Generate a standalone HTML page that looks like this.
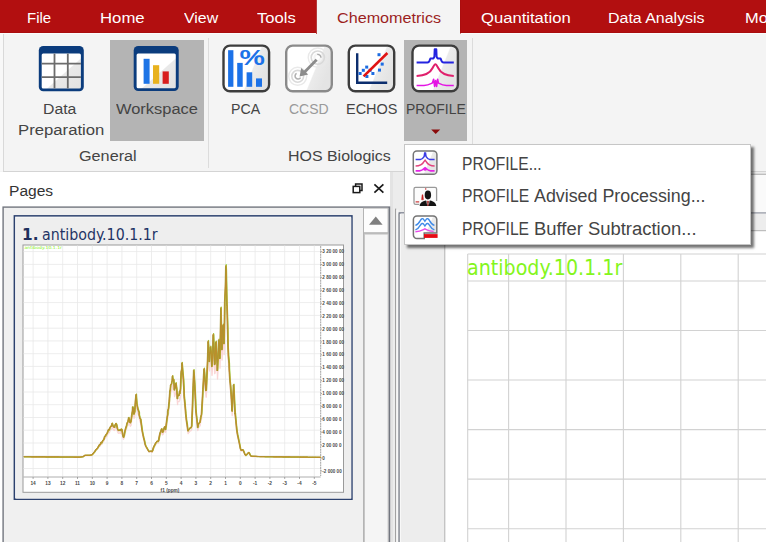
<!DOCTYPE html>
<html><head><meta charset="utf-8"><title>Chemometrics - PROFILE</title>
<style>
html,body{margin:0;padding:0}
body{width:766px;height:542px;overflow:hidden;position:relative;background:#fff;font-family:"Liberation Sans",sans-serif}
.a{position:absolute}
.t{position:absolute;white-space:nowrap;line-height:normal}
</style></head><body>
<!-- ribbon -->
<svg class="a" style="left:0;top:0" width="766" height="36"><rect x="0" y="0" width="766" height="33.3" fill="#a30c0d"/><rect x="0" y="0" width="766" height="32.4" fill="#b20f10"/></svg>
<div class="a" style="left:0;top:33px;width:766px;height:139px;background:#f4f4f4"></div>
<div class="a" style="left:0;top:33px;width:766px;height:1px;background:#fbfbfb"></div>
<div class="a" style="left:0;top:34px;width:3px;height:137px;background:#f8f8f8"></div>
<div class="a" style="left:3px;top:34px;width:1px;height:138px;background:#d9d9d9"></div>
<div class="a" style="left:3px;top:171px;width:763px;height:1px;background:#d4d4d4"></div>
<svg class="a" style="left:0;top:0" width="766" height="36"><rect x="316.1" y="0" width="144.4" height="34" fill="#a30c0d"/><rect x="316.8" y="0" width="143.2" height="34" fill="#f4f4f4"/></svg>
<!-- active buttons -->
<div class="a" style="left:110.2px;top:40.2px;width:93.5px;height:100.4px;background:#b4b4b4"></div>
<div class="a" style="left:404px;top:40.2px;width:63.2px;height:100.4px;background:#b4b4b4"></div>
<div class="a" style="left:208px;top:38px;width:1px;height:130px;background:#dcdcdc"></div>
<div class="a" style="left:472px;top:38px;width:1px;height:130px;background:#dcdcdc"></div>

<!-- below ribbon -->
<div class="a" style="left:390.3px;top:172px;width:376px;height:370px;background:#ececec"></div>
<div class="a" style="left:390.3px;top:172px;width:3px;height:370px;background:#e3e3e3"></div>
<!-- pages list / scrollbar / right pane frame -->
<svg class="a" style="left:0;top:0" width="766" height="542" viewBox="0 0 766 542" shape-rendering="geometricPrecision">
 <!-- list panel -->
 <rect x="2.4" y="206.4" width="387.8" height="340" fill="#72767f"/>
 <rect x="3.8" y="207.8" width="384.6" height="340" fill="#f0f0f0"/>
 <!-- selected item -->
 <rect x="13.6" y="215.1" width="339.1" height="284.9" fill="#2c416e"/>
 <rect x="15.1" y="216.6" width="336.1" height="281.9" fill="#fbfbfb"/>
 <rect x="16.1" y="217.6" width="335.1" height="280.9" fill="#eeeeee"/>
 <!-- scrollbar -->
 <rect x="363" y="207.8" width="25.4" height="340" fill="#b4b4b4"/>
 <rect x="364" y="208.6" width="23.6" height="23.6" fill="#fdfdfd"/>
 <rect x="364" y="233.6" width="24.4" height="320" fill="#c6c6c6"/>
 <rect x="365" y="234.6" width="22.6" height="320" fill="#f5f5f5"/>
 <!-- right pane frame -->
 <rect x="395.1" y="208.6" width="1.1" height="340" fill="#9a9a9a"/>
 <rect x="396.2" y="209.6" width="2.4" height="340" fill="#f6f6f6"/>
 <rect x="398.6" y="212.3" width="380" height="340" fill="#6a7080"/>
 <rect x="398.6" y="213.6" width="1.2" height="340" fill="#8c8f96"/>
 <rect x="399.8" y="213.6" width="380" height="340" fill="#fafafa"/>
 <rect x="400.8" y="213.6" width="380" height="340" fill="#ededed"/>
 <rect x="444.3" y="230.2" width="330" height="320" fill="#b2b2b2"/>
 <rect x="445.3" y="231.2" width="330" height="320" fill="#ffffff"/>
 <rect x="745" y="173.8" width="30" height="1" fill="#a0a0a0"/>
 <rect x="745" y="174.8" width="30" height="37.5" fill="#fafafa"/>
</svg>
<svg class="a" style="left:0;top:0" width="766" height="542"><g stroke="#d2d2d2" stroke-width="1.1"><line x1="467.7" y1="254" x2="467.7" y2="542"/><line x1="508.6" y1="254" x2="508.6" y2="542"/><line x1="566" y1="254" x2="566" y2="542"/><line x1="623.4" y1="254" x2="623.4" y2="542"/><line x1="680.8" y1="254" x2="680.8" y2="542"/><line x1="738.2" y1="254" x2="738.2" y2="542"/><line x1="467.7" y1="254.0" x2="766" y2="254.0"/><line x1="467.7" y1="281.0" x2="766" y2="281.0"/><line x1="467.7" y1="330.5" x2="766" y2="330.5"/><line x1="467.7" y1="380.0" x2="766" y2="380.0"/><line x1="467.7" y1="429.6" x2="766" y2="429.6"/><line x1="467.7" y1="479.1" x2="766" y2="479.1"/><line x1="467.7" y1="528.7" x2="766" y2="528.7"/></g></svg>

<svg style="position:absolute;left:0;top:0" width="766" height="542" viewBox="0 0 766 542">
 <rect x="23" y="245" width="320.5" height="247.3" fill="#fff" stroke="#9a9a9a" stroke-width="1"/>
 <g stroke="#e9e9e9" stroke-width="0.8"><line x1="33.1" y1="245.5" x2="33.1" y2="476.5"/><line x1="47.9" y1="245.5" x2="47.9" y2="476.5"/><line x1="62.7" y1="245.5" x2="62.7" y2="476.5"/><line x1="77.5" y1="245.5" x2="77.5" y2="476.5"/><line x1="92.3" y1="245.5" x2="92.3" y2="476.5"/><line x1="107.1" y1="245.5" x2="107.1" y2="476.5"/><line x1="121.9" y1="245.5" x2="121.9" y2="476.5"/><line x1="136.7" y1="245.5" x2="136.7" y2="476.5"/><line x1="151.5" y1="245.5" x2="151.5" y2="476.5"/><line x1="166.3" y1="245.5" x2="166.3" y2="476.5"/><line x1="181.1" y1="245.5" x2="181.1" y2="476.5"/><line x1="195.9" y1="245.5" x2="195.9" y2="476.5"/><line x1="210.7" y1="245.5" x2="210.7" y2="476.5"/><line x1="225.5" y1="245.5" x2="225.5" y2="476.5"/><line x1="240.3" y1="245.5" x2="240.3" y2="476.5"/><line x1="255.1" y1="245.5" x2="255.1" y2="476.5"/><line x1="269.9" y1="245.5" x2="269.9" y2="476.5"/><line x1="284.7" y1="245.5" x2="284.7" y2="476.5"/><line x1="299.5" y1="245.5" x2="299.5" y2="476.5"/><line x1="314.3" y1="245.5" x2="314.3" y2="476.5"/><line x1="23.5" y1="251.6" x2="320.5" y2="251.6"/><line x1="23.5" y1="264.4" x2="320.5" y2="264.4"/><line x1="23.5" y1="277.1" x2="320.5" y2="277.1"/><line x1="23.5" y1="289.9" x2="320.5" y2="289.9"/><line x1="23.5" y1="302.6" x2="320.5" y2="302.6"/><line x1="23.5" y1="315.4" x2="320.5" y2="315.4"/><line x1="23.5" y1="328.2" x2="320.5" y2="328.2"/><line x1="23.5" y1="340.9" x2="320.5" y2="340.9"/><line x1="23.5" y1="353.7" x2="320.5" y2="353.7"/><line x1="23.5" y1="366.4" x2="320.5" y2="366.4"/><line x1="23.5" y1="379.2" x2="320.5" y2="379.2"/><line x1="23.5" y1="392.0" x2="320.5" y2="392.0"/><line x1="23.5" y1="404.7" x2="320.5" y2="404.7"/><line x1="23.5" y1="417.5" x2="320.5" y2="417.5"/><line x1="23.5" y1="430.2" x2="320.5" y2="430.2"/><line x1="23.5" y1="443.0" x2="320.5" y2="443.0"/><line x1="23.5" y1="455.8" x2="320.5" y2="455.8"/><line x1="23.5" y1="468.5" x2="320.5" y2="468.5"/></g>
 <line x1="320.7" y1="246" x2="320.7" y2="476" stroke="#8a8a8a" stroke-width="0.8" stroke-dasharray="2 0.6"/>
 <line x1="23.5" y1="477" x2="320.7" y2="477" stroke="#9a9a9a" stroke-width="0.8"/>
 <g stroke="#777" stroke-width="0.6"><line x1="320.7" y1="251.6" x2="322" y2="251.6"/><line x1="320.7" y1="264.5" x2="322" y2="264.5"/><line x1="320.7" y1="277.4" x2="322" y2="277.4"/><line x1="320.7" y1="290.3" x2="322" y2="290.3"/><line x1="320.7" y1="303.2" x2="322" y2="303.2"/><line x1="320.7" y1="316.1" x2="322" y2="316.1"/><line x1="320.7" y1="329.0" x2="322" y2="329.0"/><line x1="320.7" y1="341.9" x2="322" y2="341.9"/><line x1="320.7" y1="354.8" x2="322" y2="354.8"/><line x1="320.7" y1="367.7" x2="322" y2="367.7"/><line x1="320.7" y1="380.6" x2="322" y2="380.6"/><line x1="320.7" y1="393.5" x2="322" y2="393.5"/><line x1="320.7" y1="406.4" x2="322" y2="406.4"/><line x1="320.7" y1="419.3" x2="322" y2="419.3"/><line x1="320.7" y1="432.2" x2="322" y2="432.2"/><line x1="320.7" y1="445.1" x2="322" y2="445.1"/><line x1="320.7" y1="458.0" x2="322" y2="458.0"/><line x1="320.7" y1="470.9" x2="322" y2="470.9"/><line x1="33.1" y1="477" x2="33.1" y2="479"/><line x1="47.9" y1="477" x2="47.9" y2="479"/><line x1="62.7" y1="477" x2="62.7" y2="479"/><line x1="77.5" y1="477" x2="77.5" y2="479"/><line x1="92.3" y1="477" x2="92.3" y2="479"/><line x1="107.1" y1="477" x2="107.1" y2="479"/><line x1="121.9" y1="477" x2="121.9" y2="479"/><line x1="136.7" y1="477" x2="136.7" y2="479"/><line x1="151.5" y1="477" x2="151.5" y2="479"/><line x1="166.3" y1="477" x2="166.3" y2="479"/><line x1="181.1" y1="477" x2="181.1" y2="479"/><line x1="195.9" y1="477" x2="195.9" y2="479"/><line x1="210.7" y1="477" x2="210.7" y2="479"/><line x1="225.5" y1="477" x2="225.5" y2="479"/><line x1="240.3" y1="477" x2="240.3" y2="479"/><line x1="255.1" y1="477" x2="255.1" y2="479"/><line x1="269.9" y1="477" x2="269.9" y2="479"/><line x1="284.7" y1="477" x2="284.7" y2="479"/><line x1="299.5" y1="477" x2="299.5" y2="479"/><line x1="314.3" y1="477" x2="314.3" y2="479"/></g>
 <g font-family="Liberation Sans, sans-serif" font-size="4.6" fill="#4a4a4a" style="font-weight:bold"><text x="322.3" y="253.2">3 20 00 00</text><text x="322.3" y="266.1">3 00 00 00</text><text x="322.3" y="279.0">2 80 00 00</text><text x="322.3" y="291.9">2 60 00 00</text><text x="322.3" y="304.8">2 40 00 00</text><text x="322.3" y="317.7">2 20 00 00</text><text x="322.3" y="330.6">2 00 00 00</text><text x="322.3" y="343.5">1 80 00 00</text><text x="322.3" y="356.4">1 60 00 00</text><text x="322.3" y="369.3">1 40 00 00</text><text x="322.3" y="382.2">1 20 00 00</text><text x="322.3" y="395.1">1 00 00 00</text><text x="322.3" y="408.0">8 00 00 0</text><text x="322.3" y="420.9">6 00 00 0</text><text x="322.3" y="433.8">4 00 00 0</text><text x="322.3" y="446.7">2 00 00 0</text><text x="322.3" y="459.6">0</text><text x="322.3" y="472.5">-2 000 00</text></g>
 <g font-family="Liberation Sans, sans-serif" font-size="4.8" fill="#4a4a4a" style="font-weight:bold"><text x="33.1" y="485.4" text-anchor="middle">14</text><text x="47.9" y="485.4" text-anchor="middle">13</text><text x="62.7" y="485.4" text-anchor="middle">12</text><text x="77.5" y="485.4" text-anchor="middle">11</text><text x="92.3" y="485.4" text-anchor="middle">10</text><text x="107.1" y="485.4" text-anchor="middle">9</text><text x="121.9" y="485.4" text-anchor="middle">8</text><text x="136.7" y="485.4" text-anchor="middle">7</text><text x="151.5" y="485.4" text-anchor="middle">6</text><text x="166.3" y="485.4" text-anchor="middle">5</text><text x="181.1" y="485.4" text-anchor="middle">4</text><text x="195.9" y="485.4" text-anchor="middle">3</text><text x="210.7" y="485.4" text-anchor="middle">2</text><text x="225.5" y="485.4" text-anchor="middle">1</text><text x="240.3" y="485.4" text-anchor="middle">0</text><text x="255.1" y="485.4" text-anchor="middle">-1</text><text x="269.9" y="485.4" text-anchor="middle">-2</text><text x="284.7" y="485.4" text-anchor="middle">-3</text><text x="299.5" y="485.4" text-anchor="middle">-4</text><text x="314.3" y="485.4" text-anchor="middle">-5</text><text x="170" y="491.6" text-anchor="middle">f1 (ppm)</text></g>
 <text x="24.5" y="249.3" font-family="DejaVu Sans Condensed, DejaVu Sans, sans-serif" font-size="4.2" fill="#86f020" textLength="37.5" lengthAdjust="spacingAndGlyphs">antibody.10.1.1r</text>
 <g fill="none" stroke-linejoin="round">
  <path d="M23.8,456.9 L24.6,456.9 L25.3,456.9 L26.1,456.9 L26.8,456.9 L27.6,456.9 L28.3,456.9 L29.1,457.0 L29.8,457.0 L30.6,457.0 L31.3,457.0 L32.0,457.0 L32.8,457.0 L33.5,457.0 L34.3,457.0 L35.0,457.0 L35.8,457.0 L36.5,457.0 L37.3,457.0 L38.0,457.0 L38.8,457.0 L39.5,457.0 L40.3,457.0 L41.0,457.0 L41.8,457.0 L42.5,457.0 L43.3,457.0 L44.0,457.0 L44.8,457.1 L45.5,457.1 L46.3,457.1 L47.0,457.1 L47.8,457.1 L48.5,457.1 L49.3,457.1 L50.0,457.1 L50.8,457.1 L51.5,457.1 L52.3,457.1 L53.0,457.1 L53.8,457.1 L54.5,457.1 L55.3,457.1 L56.0,457.1 L56.8,457.1 L57.5,457.1 L58.3,457.1 L59.0,457.1 L59.8,457.1 L60.5,457.2 L61.3,457.2 L62.0,457.2 L62.8,457.2 L63.5,457.2 L64.3,457.2 L65.0,457.2 L65.8,457.2 L66.5,457.2 L67.3,457.2 L68.0,457.2 L68.8,457.2 L69.5,457.2 L70.3,457.2 L71.0,457.2 L71.8,457.2 L72.5,457.2 L73.3,457.2 L74.0,457.2 L74.8,457.2 L75.5,457.2 L76.3,457.3 L77.0,457.3 L77.8,457.3 L78.5,457.3 L79.3,457.3 L80.0,457.3 L80.8,457.2 L81.5,457.1 L82.3,457.0 L83.0,456.9 L83.8,456.5 L84.5,455.9 L85.3,455.6 L86.0,455.6 L86.8,455.6 L87.5,455.6 L88.3,455.6 L89.0,455.6 L89.8,455.5 L90.5,455.5 L91.3,455.5 L92.0,455.2 L92.8,454.4 L93.5,453.6 L94.3,452.8 L95.0,452.0 L95.8,450.8 L96.5,450.1 L97.3,449.5 L98.0,448.5 L98.8,447.3 L99.5,445.9 L100.3,446.1 L101.0,444.0 L101.8,444.4 L102.5,442.7 L103.3,442.0 L104.0,441.0 L104.8,438.4 L105.5,438.3 L106.3,436.6 L107.0,436.1 L107.8,434.4 L108.5,432.2 L109.3,432.8 L110.0,430.8 L110.8,429.4 L111.5,429.4 L112.3,426.6 L113.0,428.9 L113.8,430.1 L114.5,430.5 L115.3,428.0 L116.0,426.8 L116.8,428.3 L117.5,431.6 L118.3,433.1 L119.0,433.4 L119.8,432.6 L120.5,433.4 L121.3,431.9 L122.0,432.5 L122.8,437.0 L123.5,439.3 L124.3,437.4 L125.0,433.8 L125.8,431.1 L126.5,429.0 L127.3,426.2 L128.1,425.3 L128.8,421.5 L129.6,424.0 L130.3,426.4 L131.1,425.1 L131.8,419.7 L132.6,415.4 L132.8,411.7 L133.3,413.2 L134.1,418.4 L134.8,416.1 L135.6,406.1 L136.3,400.5 L136.3,401.1 L137.1,409.5 L137.8,413.0 L137.8,413.2 L138.6,415.3 L139.3,417.1 L139.3,419.0 L140.1,422.0 L140.8,423.2 L141.6,428.4 L142.3,433.2 L143.1,436.7 L143.8,439.9 L144.6,442.6 L145.3,445.8 L146.1,447.7 L146.8,448.7 L147.6,450.0 L148.3,451.1 L149.1,452.3 L149.8,452.1 L150.6,451.9 L151.3,451.8 L152.1,452.4 L152.8,451.0 L153.6,448.6 L154.3,447.2 L155.1,445.9 L155.8,444.5 L156.6,443.6 L157.3,442.8 L158.1,443.2 L158.8,441.9 L159.6,437.8 L160.3,435.2 L161.1,433.3 L161.8,431.6 L162.6,434.9 L163.3,434.0 L164.1,431.3 L164.8,429.7 L165.6,432.4 L166.3,428.3 L167.1,422.6 L167.8,418.4 L167.9,415.7 L168.6,413.2 L169.3,407.1 L170.1,397.1 L170.3,397.1 L170.8,392.0 L171.6,391.1 L172.3,388.0 L172.6,383.8 L173.1,387.5 L173.8,387.3 L174.6,396.6 L174.7,394.5 L175.3,395.0 L176.1,390.3 L176.2,391.8 L176.8,395.6 L177.6,404.5 L177.6,402.4 L178.3,401.6 L179.1,401.7 L179.8,397.5 L180.0,399.8 L180.6,395.4 L181.3,380.2 L182.1,376.8 L182.1,371.9 L182.8,379.6 L183.6,387.1 L184.1,397.1 L184.3,402.3 L185.1,408.9 L185.8,417.3 L185.9,418.3 L186.6,424.0 L187.3,428.0 L188.1,433.7 L188.8,432.5 L189.6,431.7 L190.3,430.8 L191.1,430.7 L191.8,429.2 L192.6,411.0 L193.3,392.6 L193.9,378.5 L194.1,380.3 L194.8,391.2 L195.6,405.3 L195.9,413.0 L196.3,417.8 L197.1,423.5 L197.8,430.5 L198.6,427.6 L199.3,426.3 L200.1,425.9 L200.8,421.5 L201.6,418.6 L201.8,415.7 L202.3,408.2 L203.1,395.9 L203.8,383.3 L204.2,377.2 L204.6,380.8 L205.3,389.4 L206.1,397.2 L206.3,397.1 L206.8,386.9 L207.6,372.0 L208.2,354.9 L208.3,352.3 L209.1,361.2 L209.5,370.9 L209.8,363.9 L210.6,362.3 L210.7,357.4 L211.3,362.8 L212.0,375.4 L212.1,375.3 L212.8,362.9 L213.4,346.1 L213.6,346.8 L214.3,364.2 L214.7,373.6 L215.1,373.1 L215.8,353.9 L216.1,352.9 L216.6,361.2 L217.3,372.6 L217.5,379.0 L218.1,369.5 L218.8,353.6 L218.9,351.1 L219.6,356.4 L220.0,368.2 L220.3,356.7 L221.0,325.7 L221.1,322.1 L221.8,354.3 L222.1,360.1 L222.6,346.3 L223.1,339.4 L223.3,337.5 L224.1,351.1 L224.1,354.7 L224.8,320.2 L224.9,316.0 L225.6,301.9 L226.0,284.0 L226.3,288.7 L227.1,320.0 L227.1,320.5 L227.8,341.3 L228.1,357.4 L228.6,365.9 L229.3,372.6 L229.4,377.2 L230.1,387.4 L230.8,394.3 L231.6,405.0 L232.2,415.7 L232.3,413.7 L233.1,402.9 L233.7,391.8 L233.8,391.7 L234.6,406.7 L235.2,418.3 L235.3,417.4 L236.1,424.7 L236.8,431.9 L237.6,436.6 L238.3,439.5 L239.1,442.8 L239.8,446.1 L240.6,449.8 L241.3,451.2 L242.1,450.7 L242.8,450.5 L243.6,451.6 L244.3,453.1 L245.1,454.9 L245.8,455.8 L246.6,455.1 L247.3,454.4 L248.1,453.7 L248.8,453.1 L249.6,453.9 L250.3,455.4 L251.1,456.4 L251.8,456.4 L252.6,456.5 L253.3,456.5 L254.1,456.5 L254.8,456.6 L255.6,456.6 L256.3,456.6 L257.1,456.7 L257.8,456.7 L258.6,456.7 L259.3,456.8 L260.1,456.8 L260.8,456.8 L261.6,456.8 L262.3,456.9 L263.1,456.9 L263.8,456.9 L264.6,456.9 L265.3,456.9 L266.1,456.9 L266.8,456.9 L267.6,456.9 L268.3,456.9 L269.1,456.9 L269.8,456.9 L270.6,456.9 L271.3,456.9 L272.1,457.0 L272.8,457.0 L273.6,457.0 L274.3,457.0 L275.1,457.0 L275.8,457.0 L276.6,457.0 L277.3,457.0 L278.1,457.0 L278.8,457.0 L279.6,457.0 L280.3,457.0 L281.1,457.0 L281.8,457.1 L282.6,457.1 L283.3,457.1 L284.1,457.1 L284.8,457.1 L285.6,457.1 L286.3,457.1 L287.1,457.1 L287.8,457.1 L288.6,457.1 L289.3,457.1 L290.1,457.1 L290.8,457.1 L291.6,457.2 L292.3,457.2 L293.1,457.2 L293.8,457.2 L294.6,457.2 L295.3,457.2 L296.1,457.2 L296.8,457.2 L297.6,457.2 L298.3,457.2 L299.1,457.2 L299.8,457.2 L300.6,457.2 L301.3,457.3 L302.1,457.3 L302.8,457.3 L303.6,457.3 L304.3,457.3 L305.1,457.3 L305.8,457.3 L306.6,457.3 L307.3,457.3 L308.1,457.3 L308.8,457.3 L309.6,457.3 L310.3,457.4 L311.1,457.4 L311.8,457.4 L312.6,457.4 L313.3,457.4 L314.1,457.4 L314.8,457.4 L315.6,457.4 L316.3,457.4 L317.1,457.4 L317.8,457.4 L318.6,457.4 L319.3,457.4 L320.1,457.5 L320.8,457.5" stroke="#f9cfcf" stroke-width="1.3" opacity="0.85"/>
  <path d="M24.0,456.8 L24.8,456.8 L25.5,456.8 L26.2,456.8 L27.0,456.8 L27.8,456.8 L28.5,456.8 L29.2,456.8 L30.0,456.8 L30.8,456.8 L31.5,456.9 L32.2,456.9 L33.0,456.9 L33.8,456.9 L34.5,456.9 L35.2,456.9 L36.0,456.9 L36.8,456.9 L37.5,456.9 L38.2,456.9 L39.0,456.9 L39.8,456.9 L40.5,456.9 L41.2,456.9 L42.0,456.9 L42.8,456.9 L43.5,456.9 L44.2,456.9 L45.0,456.9 L45.8,457.0 L46.5,457.0 L47.2,457.0 L48.0,457.0 L48.8,457.0 L49.5,457.0 L50.2,457.0 L51.0,457.0 L51.8,457.0 L52.5,457.0 L53.2,457.0 L54.0,457.0 L54.8,457.0 L55.5,457.0 L56.2,457.0 L57.0,457.0 L57.8,457.0 L58.5,457.0 L59.2,457.0 L60.0,457.1 L60.8,457.1 L61.5,457.1 L62.2,457.1 L63.0,457.1 L63.8,457.1 L64.5,457.1 L65.2,457.1 L66.0,457.1 L66.8,457.1 L67.5,457.1 L68.2,457.1 L69.0,457.1 L69.8,457.1 L70.5,457.1 L71.2,457.1 L72.0,457.1 L72.8,457.1 L73.5,457.2 L74.2,457.2 L75.0,457.2 L75.8,457.2 L76.5,457.2 L77.2,457.2 L78.0,457.2 L78.8,457.2 L79.5,457.2 L80.2,457.2 L81.0,457.1 L81.8,457.0 L82.5,456.9 L83.2,456.8 L84.0,456.3 L84.8,455.6 L85.5,455.4 L86.2,455.4 L87.0,455.3 L87.8,455.3 L88.5,455.3 L89.2,455.3 L90.0,455.3 L90.8,455.2 L91.5,455.2 L92.2,454.9 L93.0,454.0 L93.8,453.1 L94.5,452.3 L95.2,451.4 L96.0,450.0 L96.8,449.2 L97.5,448.6 L98.2,447.4 L99.0,446.1 L99.8,444.6 L100.5,444.7 L101.2,442.5 L102.0,442.9 L102.8,441.0 L103.5,440.2 L104.2,439.1 L105.0,436.3 L105.8,436.1 L106.5,434.2 L107.2,433.7 L108.0,431.8 L108.8,429.4 L109.5,430.0 L110.2,427.7 L111.0,426.2 L111.8,426.2 L112.5,423.1 L113.2,425.7 L114.0,426.9 L114.8,427.4 L115.5,424.7 L116.2,423.3 L117.0,424.9 L117.8,428.7 L118.5,430.3 L119.2,430.6 L120.0,429.8 L120.8,430.7 L121.5,429.0 L122.2,429.7 L123.0,434.7 L123.8,437.3 L124.5,435.2 L125.2,431.1 L126.0,428.1 L126.8,425.8 L127.5,422.7 L128.2,421.7 L129.0,417.4 L129.8,420.3 L130.5,422.8 L131.2,421.5 L132.0,415.5 L132.8,410.6 L133.0,406.6 L133.5,408.2 L134.2,414.1 L135.0,411.5 L135.8,400.3 L136.5,394.1 L136.5,394.8 L137.2,404.1 L138.0,408.0 L138.0,408.2 L138.8,410.5 L139.5,412.5 L139.5,414.6 L140.2,418.0 L141.0,419.3 L141.8,425.1 L142.5,430.4 L143.2,434.3 L144.0,437.9 L144.8,440.9 L145.5,444.5 L146.2,446.5 L147.0,447.7 L147.8,449.1 L148.5,450.4 L149.2,451.6 L150.0,451.4 L150.8,451.3 L151.5,451.1 L152.2,451.7 L153.0,450.2 L153.8,447.5 L154.5,446.0 L155.2,444.6 L156.0,443.0 L156.8,442.0 L157.5,441.2 L158.2,441.6 L159.0,440.2 L159.8,435.6 L160.5,432.7 L161.2,430.5 L162.0,428.7 L162.8,432.3 L163.5,431.3 L164.2,428.3 L165.0,426.6 L165.8,429.6 L166.5,425.0 L167.2,418.7 L168.0,414.0 L168.1,411.0 L168.8,408.2 L169.5,401.4 L170.2,390.3 L170.5,390.3 L171.0,384.6 L171.8,383.7 L172.5,380.2 L172.8,375.6 L173.2,379.7 L174.0,379.4 L174.8,389.8 L174.9,387.4 L175.5,387.9 L176.2,382.7 L176.4,384.4 L177.0,388.7 L177.8,398.5 L177.8,396.2 L178.5,395.3 L179.2,395.5 L180.0,390.8 L180.2,393.3 L180.8,388.5 L181.5,371.6 L182.2,367.7 L182.3,362.3 L183.0,370.9 L183.8,379.3 L184.3,390.3 L184.5,396.1 L185.2,403.4 L186.0,412.7 L186.1,413.9 L186.8,420.3 L187.5,424.7 L188.2,431.0 L189.0,429.7 L189.8,428.8 L190.5,427.7 L191.2,427.7 L192.0,426.0 L192.8,405.7 L193.5,385.3 L194.1,369.7 L194.2,371.7 L195.0,383.8 L195.8,399.4 L196.1,408.0 L196.5,413.3 L197.2,419.6 L198.0,427.5 L198.8,424.2 L199.5,422.7 L200.2,422.3 L201.0,417.5 L201.8,414.2 L202.0,411.0 L202.5,402.7 L203.2,389.0 L204.0,375.0 L204.4,368.2 L204.8,372.2 L205.5,381.8 L206.2,390.4 L206.5,390.3 L207.0,379.0 L207.8,362.4 L208.4,343.5 L208.5,340.5 L209.2,350.4 L209.7,361.2 L210.0,353.4 L210.8,351.6 L210.9,346.2 L211.5,352.2 L212.2,366.2 L212.2,366.1 L213.0,352.4 L213.6,333.7 L213.8,334.4 L214.5,353.8 L214.9,364.2 L215.2,363.7 L216.0,342.3 L216.3,341.2 L216.8,350.5 L217.5,363.1 L217.7,370.2 L218.2,359.6 L219.0,342.0 L219.1,339.2 L219.8,345.1 L220.2,358.2 L220.5,345.5 L221.2,311.0 L221.2,307.0 L222.0,342.8 L222.3,349.2 L222.8,333.9 L223.3,326.2 L223.5,324.1 L224.2,339.3 L224.3,343.2 L225.0,304.9 L225.1,300.2 L225.8,284.6 L226.2,264.7 L226.5,269.9 L227.2,304.7 L227.3,305.2 L228.0,328.3 L228.3,346.2 L228.8,355.7 L229.5,363.2 L229.6,368.2 L230.2,379.6 L231.0,387.2 L231.8,399.1 L232.4,411.0 L232.5,408.8 L233.2,396.8 L233.9,384.4 L234.0,384.3 L234.8,401.0 L235.4,413.9 L235.5,412.9 L236.2,421.0 L237.0,429.0 L237.8,434.2 L238.5,437.5 L239.2,441.1 L240.0,444.8 L240.8,448.9 L241.5,450.4 L242.2,449.9 L243.0,449.7 L243.8,450.9 L244.5,452.6 L245.2,454.6 L246.0,455.5 L246.8,454.8 L247.5,454.0 L248.2,453.2 L249.0,452.5 L249.8,453.5 L250.5,455.1 L251.2,456.2 L252.0,456.3 L252.8,456.3 L253.5,456.3 L254.2,456.4 L255.0,456.4 L255.8,456.4 L256.5,456.5 L257.2,456.5 L258.0,456.6 L258.8,456.6 L259.5,456.6 L260.2,456.7 L261.0,456.7 L261.8,456.7 L262.5,456.7 L263.2,456.7 L264.0,456.7 L264.8,456.7 L265.5,456.8 L266.2,456.8 L267.0,456.8 L267.8,456.8 L268.5,456.8 L269.2,456.8 L270.0,456.8 L270.8,456.8 L271.5,456.8 L272.2,456.8 L273.0,456.8 L273.8,456.9 L274.5,456.9 L275.2,456.9 L276.0,456.9 L276.8,456.9 L277.5,456.9 L278.2,456.9 L279.0,456.9 L279.8,456.9 L280.5,456.9 L281.2,456.9 L282.0,456.9 L282.8,457.0 L283.5,457.0 L284.2,457.0 L285.0,457.0 L285.8,457.0 L286.5,457.0 L287.2,457.0 L288.0,457.0 L288.8,457.0 L289.5,457.0 L290.2,457.0 L291.0,457.1 L291.8,457.1 L292.5,457.1 L293.2,457.1 L294.0,457.1 L294.8,457.1 L295.5,457.1 L296.2,457.1 L297.0,457.1 L297.8,457.1 L298.5,457.1 L299.2,457.1 L300.0,457.2 L300.8,457.2 L301.5,457.2 L302.2,457.2 L303.0,457.2 L303.8,457.2 L304.5,457.2 L305.2,457.2 L306.0,457.2 L306.8,457.2 L307.5,457.2 L308.2,457.3 L309.0,457.3 L309.8,457.3 L310.5,457.3 L311.2,457.3 L312.0,457.3 L312.8,457.3 L313.5,457.3 L314.2,457.3 L315.0,457.3 L315.8,457.3 L316.5,457.3 L317.2,457.4 L318.0,457.4 L318.8,457.4 L319.5,457.4 L320.2,457.4 L321.0,457.4" stroke="#8ad12c" stroke-width="1.25"/>
  <path d="M23.8,456.7 L24.5,456.7 L25.2,456.7 L26.0,456.7 L26.8,456.7 L27.5,456.7 L28.2,456.7 L29.0,456.7 L29.8,456.7 L30.5,456.7 L31.2,456.8 L32.0,456.8 L32.8,456.8 L33.5,456.8 L34.2,456.8 L35.0,456.8 L35.8,456.8 L36.5,456.8 L37.2,456.8 L38.0,456.8 L38.8,456.8 L39.5,456.8 L40.2,456.8 L41.0,456.8 L41.8,456.8 L42.5,456.8 L43.2,456.8 L44.0,456.8 L44.8,456.8 L45.5,456.9 L46.2,456.9 L47.0,456.9 L47.8,456.9 L48.5,456.9 L49.2,456.9 L50.0,456.9 L50.8,456.9 L51.5,456.9 L52.2,456.9 L53.0,456.9 L53.8,456.9 L54.5,456.9 L55.2,456.9 L56.0,456.9 L56.8,456.9 L57.5,456.9 L58.2,456.9 L59.0,456.9 L59.8,457.0 L60.5,457.0 L61.2,457.0 L62.0,457.0 L62.8,457.0 L63.5,457.0 L64.2,457.0 L65.0,457.0 L65.8,457.0 L66.5,457.0 L67.2,457.0 L68.0,457.0 L68.8,457.0 L69.5,457.0 L70.2,457.0 L71.0,457.0 L71.8,457.0 L72.5,457.0 L73.2,457.0 L74.0,457.1 L74.8,457.1 L75.5,457.1 L76.2,457.1 L77.0,457.1 L77.8,457.1 L78.5,457.1 L79.2,457.1 L80.0,457.1 L80.8,457.0 L81.5,456.9 L82.2,456.8 L83.0,456.7 L83.8,456.2 L84.5,455.5 L85.2,455.3 L86.0,455.3 L86.8,455.3 L87.5,455.2 L88.2,455.2 L89.0,455.2 L89.8,455.2 L90.5,455.1 L91.2,455.1 L92.0,454.8 L92.8,453.9 L93.5,453.1 L94.2,452.2 L95.0,451.3 L95.8,449.9 L96.5,449.1 L97.2,448.5 L98.0,447.4 L98.8,446.1 L99.5,444.5 L100.2,444.7 L101.0,442.4 L101.8,442.9 L102.5,441.0 L103.2,440.2 L104.0,439.1 L104.8,436.3 L105.5,436.1 L106.2,434.2 L107.0,433.7 L107.8,431.8 L108.5,429.4 L109.2,430.0 L110.0,427.8 L110.8,426.3 L111.5,426.3 L112.2,423.2 L113.0,425.8 L113.8,427.0 L114.5,427.4 L115.2,424.7 L116.0,423.4 L116.8,425.0 L117.5,428.7 L118.2,430.4 L119.0,430.6 L119.8,429.8 L120.5,430.7 L121.2,429.0 L122.0,429.7 L122.8,434.7 L123.5,437.3 L124.2,435.2 L125.0,431.1 L125.8,428.1 L126.5,425.9 L127.2,422.8 L128.0,421.8 L128.8,417.5 L129.5,420.3 L130.2,422.9 L131.0,421.6 L131.8,415.6 L132.5,410.8 L132.8,406.8 L133.2,408.3 L134.0,414.2 L134.8,411.6 L135.5,400.5 L136.2,394.3 L136.2,395.0 L137.0,404.3 L137.8,408.1 L137.8,408.4 L138.5,410.7 L139.2,412.6 L139.2,414.7 L140.0,418.1 L140.8,419.4 L141.5,425.1 L142.2,430.5 L143.0,434.3 L143.8,437.9 L144.5,440.8 L145.2,444.4 L146.0,446.5 L146.8,447.6 L147.5,449.0 L148.2,450.3 L149.0,451.5 L149.8,451.4 L150.5,451.2 L151.2,451.0 L152.0,451.7 L152.8,450.2 L153.5,447.5 L154.2,446.0 L155.0,444.5 L155.8,443.0 L156.5,442.0 L157.2,441.1 L158.0,441.5 L158.8,440.1 L159.5,435.6 L160.2,432.7 L161.0,430.6 L161.8,428.7 L162.5,432.3 L163.2,431.4 L164.0,428.4 L164.8,426.6 L165.5,429.6 L166.2,425.1 L167.0,418.8 L167.8,414.1 L167.8,411.1 L168.5,408.4 L169.2,401.6 L170.0,390.6 L170.2,390.5 L170.8,384.9 L171.5,384.0 L172.2,380.5 L172.6,375.9 L173.0,380.0 L173.8,379.7 L174.5,390.0 L174.7,387.6 L175.2,388.2 L176.0,383.0 L176.2,384.7 L176.8,388.9 L177.5,398.7 L177.6,396.4 L178.2,395.5 L179.0,395.7 L179.8,391.0 L179.9,393.5 L180.5,388.7 L181.2,371.9 L182.0,368.1 L182.1,362.7 L182.8,371.2 L183.5,379.6 L184.1,390.5 L184.2,396.3 L185.0,403.6 L185.8,412.9 L185.8,414.0 L186.5,420.3 L187.2,424.7 L188.0,431.0 L188.8,429.7 L189.5,428.9 L190.2,427.8 L191.0,427.7 L191.8,426.0 L192.5,405.9 L193.2,385.5 L193.8,370.0 L194.0,372.0 L194.8,384.1 L195.5,399.6 L195.8,408.1 L196.2,413.5 L197.0,419.7 L197.8,427.5 L198.5,424.3 L199.2,422.8 L200.0,422.4 L200.8,417.6 L201.5,414.4 L201.8,411.1 L202.2,402.9 L203.0,389.3 L203.8,375.3 L204.2,368.5 L204.5,372.6 L205.2,382.0 L206.0,390.7 L206.2,390.5 L206.8,379.3 L207.5,362.8 L208.2,344.0 L208.2,341.0 L209.0,350.8 L209.4,361.6 L209.8,353.8 L210.5,352.1 L210.7,346.7 L211.2,352.6 L211.9,366.6 L212.0,366.4 L212.8,352.8 L213.3,334.2 L213.5,334.9 L214.2,354.2 L214.7,364.6 L215.0,364.0 L215.8,342.8 L216.1,341.7 L216.5,350.9 L217.2,363.4 L217.4,370.5 L218.0,360.0 L218.8,342.4 L218.8,339.7 L219.5,345.5 L219.9,358.6 L220.2,345.9 L220.9,311.6 L221.0,307.7 L221.8,343.2 L222.1,349.6 L222.5,334.4 L223.1,326.8 L223.2,324.6 L224.0,339.8 L224.1,343.7 L224.8,305.6 L224.8,300.9 L225.5,285.4 L225.9,265.6 L226.2,270.7 L227.0,305.3 L227.1,305.9 L227.8,328.9 L228.1,346.7 L228.5,356.1 L229.2,363.5 L229.3,368.5 L230.0,379.8 L230.8,387.5 L231.5,399.3 L232.2,411.1 L232.2,409.0 L233.0,397.0 L233.7,384.7 L233.8,384.5 L234.5,401.1 L235.2,414.0 L235.2,413.0 L236.0,421.1 L236.8,429.1 L237.5,434.2 L238.2,437.5 L239.0,441.1 L239.8,444.8 L240.5,448.8 L241.2,450.4 L242.0,449.9 L242.8,449.6 L243.5,450.8 L244.2,452.5 L245.0,454.5 L245.8,455.4 L246.5,454.7 L247.2,453.9 L248.0,453.2 L248.8,452.4 L249.5,453.4 L250.2,455.0 L251.0,456.1 L251.8,456.2 L252.5,456.2 L253.2,456.2 L254.0,456.3 L254.8,456.3 L255.5,456.4 L256.2,456.4 L257.0,456.4 L257.8,456.5 L258.5,456.5 L259.2,456.5 L260.0,456.6 L260.8,456.6 L261.5,456.6 L262.2,456.6 L263.0,456.6 L263.8,456.6 L264.5,456.7 L265.2,456.7 L266.0,456.7 L266.8,456.7 L267.5,456.7 L268.2,456.7 L269.0,456.7 L269.8,456.7 L270.5,456.7 L271.2,456.7 L272.0,456.7 L272.8,456.7 L273.5,456.8 L274.2,456.8 L275.0,456.8 L275.8,456.8 L276.5,456.8 L277.2,456.8 L278.0,456.8 L278.8,456.8 L279.5,456.8 L280.2,456.8 L281.0,456.8 L281.8,456.8 L282.5,456.9 L283.2,456.9 L284.0,456.9 L284.8,456.9 L285.5,456.9 L286.2,456.9 L287.0,456.9 L287.8,456.9 L288.5,456.9 L289.2,456.9 L290.0,456.9 L290.8,457.0 L291.5,457.0 L292.2,457.0 L293.0,457.0 L293.8,457.0 L294.5,457.0 L295.2,457.0 L296.0,457.0 L296.8,457.0 L297.5,457.0 L298.2,457.0 L299.0,457.0 L299.8,457.1 L300.5,457.1 L301.2,457.1 L302.0,457.1 L302.8,457.1 L303.5,457.1 L304.2,457.1 L305.0,457.1 L305.8,457.1 L306.5,457.1 L307.2,457.1 L308.0,457.2 L308.8,457.2 L309.5,457.2 L310.2,457.2 L311.0,457.2 L311.8,457.2 L312.5,457.2 L313.2,457.2 L314.0,457.2 L314.8,457.2 L315.5,457.2 L316.2,457.2 L317.0,457.3 L317.8,457.3 L318.5,457.3 L319.2,457.3 L320.0,457.3 L320.8,457.3" stroke="#d2862a" stroke-width="1.15"/>
  <path d="M23.4,456.6 L24.1,456.6 L24.9,456.6 L25.6,456.6 L26.4,456.6 L27.1,456.6 L27.9,456.6 L28.6,456.6 L29.4,456.6 L30.1,456.6 L30.9,456.7 L31.6,456.7 L32.4,456.7 L33.1,456.7 L33.9,456.7 L34.6,456.7 L35.4,456.7 L36.1,456.7 L36.9,456.7 L37.6,456.7 L38.4,456.7 L39.1,456.7 L39.9,456.7 L40.6,456.7 L41.4,456.7 L42.1,456.7 L42.9,456.7 L43.6,456.7 L44.4,456.7 L45.1,456.8 L45.9,456.8 L46.6,456.8 L47.4,456.8 L48.1,456.8 L48.9,456.8 L49.6,456.8 L50.4,456.8 L51.1,456.8 L51.9,456.8 L52.6,456.8 L53.4,456.8 L54.1,456.8 L54.9,456.8 L55.6,456.8 L56.4,456.8 L57.1,456.8 L57.9,456.8 L58.6,456.8 L59.4,456.9 L60.1,456.9 L60.9,456.9 L61.6,456.9 L62.4,456.9 L63.1,456.9 L63.9,456.9 L64.6,456.9 L65.3,456.9 L66.1,456.9 L66.8,456.9 L67.6,456.9 L68.3,456.9 L69.1,456.9 L69.8,456.9 L70.6,456.9 L71.3,456.9 L72.1,456.9 L72.8,456.9 L73.6,457.0 L74.3,457.0 L75.1,457.0 L75.8,457.0 L76.6,457.0 L77.3,457.0 L78.1,457.0 L78.8,457.0 L79.6,457.0 L80.3,456.9 L81.1,456.8 L81.8,456.7 L82.6,456.6 L83.3,456.1 L84.1,455.4 L84.8,455.2 L85.6,455.2 L86.3,455.2 L87.1,455.1 L87.8,455.1 L88.6,455.1 L89.3,455.1 L90.1,455.1 L90.8,455.0 L91.6,454.7 L92.3,453.9 L93.1,453.0 L93.8,452.1 L94.6,451.2 L95.3,449.8 L96.1,449.1 L96.8,448.5 L97.6,447.3 L98.3,446.0 L99.1,444.5 L99.8,444.7 L100.6,442.4 L101.3,442.8 L102.1,441.0 L102.8,440.1 L103.6,439.1 L104.3,436.3 L105.1,436.1 L105.8,434.2 L106.6,433.7 L107.3,431.8 L108.1,429.5 L108.8,430.1 L109.6,427.8 L110.3,426.3 L111.1,426.3 L111.8,423.3 L112.6,425.8 L113.3,427.0 L114.1,427.5 L114.8,424.8 L115.6,423.5 L116.3,425.1 L117.1,428.8 L117.8,430.4 L118.6,430.7 L119.3,429.8 L120.1,430.8 L120.8,429.1 L121.6,429.7 L122.3,434.7 L123.1,437.3 L123.8,435.2 L124.6,431.2 L125.3,428.2 L126.1,425.9 L126.8,422.9 L127.6,421.9 L128.3,417.6 L129.1,420.4 L129.8,423.0 L130.6,421.6 L131.3,415.7 L132.1,410.9 L132.3,406.9 L132.8,408.5 L133.6,414.3 L134.3,411.8 L135.1,400.7 L135.8,394.5 L135.8,395.2 L136.6,404.5 L137.3,408.3 L137.3,408.5 L138.1,410.8 L138.8,412.7 L138.8,414.8 L139.6,418.2 L140.3,419.5 L141.1,425.2 L141.8,430.5 L142.6,434.4 L143.3,437.9 L144.1,440.8 L144.8,444.4 L145.6,446.4 L146.3,447.6 L147.1,449.0 L147.8,450.3 L148.6,451.5 L149.3,451.3 L150.1,451.1 L150.8,451.0 L151.6,451.6 L152.3,450.1 L153.1,447.4 L153.8,445.9 L154.6,444.5 L155.3,442.9 L156.1,442.0 L156.8,441.1 L157.6,441.5 L158.3,440.1 L159.1,435.6 L159.8,432.8 L160.6,430.6 L161.3,428.8 L162.1,432.4 L162.8,431.4 L163.6,428.4 L164.3,426.7 L165.1,429.7 L165.8,425.1 L166.6,418.8 L167.3,414.2 L167.4,411.3 L168.1,408.5 L168.8,401.8 L169.6,390.8 L169.8,390.8 L170.3,385.2 L171.1,384.3 L171.8,380.8 L172.2,376.2 L172.6,380.3 L173.3,380.0 L174.1,390.3 L174.2,387.9 L174.8,388.4 L175.6,383.3 L175.8,384.9 L176.3,389.2 L177.1,398.9 L177.2,396.6 L177.8,395.7 L178.6,395.9 L179.3,391.2 L179.5,393.7 L180.1,388.9 L180.8,372.2 L181.6,368.4 L181.7,363.0 L182.3,371.5 L183.1,379.8 L183.7,390.8 L183.8,396.5 L184.6,403.8 L185.3,413.0 L185.4,414.1 L186.1,420.4 L186.8,424.8 L187.6,431.0 L188.3,429.8 L189.1,428.9 L189.8,427.8 L190.6,427.8 L191.3,426.1 L192.1,406.1 L192.8,385.8 L193.4,370.4 L193.6,372.3 L194.3,384.4 L195.1,399.8 L195.4,408.3 L195.8,413.6 L196.6,419.8 L197.3,427.6 L198.1,424.4 L198.8,422.9 L199.6,422.5 L200.3,417.7 L201.1,414.5 L201.3,411.3 L201.8,403.1 L202.6,389.5 L203.3,375.6 L203.8,368.9 L204.1,372.9 L204.8,382.3 L205.6,390.9 L205.8,390.8 L206.3,379.6 L207.1,363.1 L207.8,344.4 L207.8,341.5 L208.6,351.3 L209.0,362.0 L209.3,354.2 L210.1,352.5 L210.2,347.1 L210.8,353.0 L211.5,366.9 L211.6,366.8 L212.3,353.2 L212.9,334.7 L213.1,335.4 L213.8,354.6 L214.2,364.9 L214.6,364.4 L215.3,343.2 L215.7,342.2 L216.1,351.4 L216.8,363.8 L217.0,370.9 L217.6,360.4 L218.3,342.9 L218.4,340.2 L219.1,346.0 L219.5,359.0 L219.8,346.4 L220.5,312.3 L220.6,308.3 L221.3,343.7 L221.7,350.1 L222.1,334.9 L222.7,327.3 L222.8,325.2 L223.6,340.3 L223.7,344.1 L224.3,306.2 L224.4,301.6 L225.1,286.1 L225.5,266.4 L225.8,271.6 L226.6,306.0 L226.7,306.5 L227.3,329.4 L227.7,347.1 L228.1,356.5 L228.8,363.9 L228.9,368.9 L229.6,380.1 L230.3,387.7 L231.1,399.5 L231.8,411.3 L231.8,409.1 L232.6,397.2 L233.2,384.9 L233.3,384.8 L234.1,401.3 L234.8,414.1 L234.8,413.1 L235.6,421.2 L236.3,429.1 L237.1,434.2 L237.8,437.5 L238.6,441.1 L239.3,444.7 L240.1,448.8 L240.8,450.3 L241.6,449.8 L242.3,449.6 L243.1,450.8 L243.8,452.4 L244.6,454.4 L245.3,455.3 L246.1,454.6 L246.8,453.8 L247.6,453.1 L248.3,452.3 L249.1,453.3 L249.8,454.9 L250.6,456.0 L251.3,456.1 L252.1,456.1 L252.8,456.1 L253.6,456.2 L254.3,456.2 L255.1,456.3 L255.8,456.3 L256.6,456.3 L257.4,456.4 L258.1,456.4 L258.9,456.5 L259.6,456.5 L260.4,456.5 L261.1,456.5 L261.9,456.5 L262.6,456.5 L263.4,456.5 L264.1,456.6 L264.9,456.6 L265.6,456.6 L266.4,456.6 L267.1,456.6 L267.9,456.6 L268.6,456.6 L269.4,456.6 L270.1,456.6 L270.9,456.6 L271.6,456.6 L272.4,456.6 L273.1,456.7 L273.9,456.7 L274.6,456.7 L275.4,456.7 L276.1,456.7 L276.9,456.7 L277.6,456.7 L278.4,456.7 L279.1,456.7 L279.9,456.7 L280.6,456.7 L281.4,456.7 L282.1,456.8 L282.9,456.8 L283.6,456.8 L284.4,456.8 L285.1,456.8 L285.9,456.8 L286.6,456.8 L287.4,456.8 L288.1,456.8 L288.9,456.8 L289.6,456.8 L290.4,456.9 L291.1,456.9 L291.9,456.9 L292.6,456.9 L293.4,456.9 L294.1,456.9 L294.9,456.9 L295.6,456.9 L296.4,456.9 L297.1,456.9 L297.9,456.9 L298.6,456.9 L299.4,457.0 L300.1,457.0 L300.9,457.0 L301.6,457.0 L302.4,457.0 L303.1,457.0 L303.9,457.0 L304.6,457.0 L305.4,457.0 L306.1,457.0 L306.9,457.0 L307.6,457.0 L308.4,457.1 L309.1,457.1 L309.9,457.1 L310.6,457.1 L311.4,457.1 L312.1,457.1 L312.9,457.1 L313.6,457.1 L314.4,457.1 L315.1,457.1 L315.9,457.1 L316.6,457.2 L317.4,457.2 L318.1,457.2 L318.9,457.2 L319.6,457.2 L320.4,457.2" stroke="#a8952f" stroke-width="0.85"/>
 </g>
</svg>
<svg class="a" style="left:0;top:0" width="766" height="542" viewBox="0 0 766 542">
<defs>
 <linearGradient id="gl" x1="0" y1="0" x2="1" y2="1">
  <stop offset="0" stop-color="#ffffff"/><stop offset="0.56" stop-color="#ffffff"/><stop offset="0.58" stop-color="#e9e9e9"/><stop offset="1" stop-color="#e2e2e2"/>
 </linearGradient>
 <linearGradient id="gs" x1="0" y1="0" x2="1" y2="0.41">
  <stop offset="0" stop-color="#ffffff"/><stop offset="0.715" stop-color="#ffffff"/><stop offset="0.74" stop-color="#ebebeb"/><stop offset="1" stop-color="#e4e4e4"/>
 </linearGradient>
 <linearGradient id="gc" x1="0" y1="0" x2="1" y2="1">
  <stop offset="0" stop-color="#ffffff"/><stop offset="0.5" stop-color="#ffffff"/><stop offset="0.52" stop-color="#e6e6e6"/><stop offset="1" stop-color="#e0e0e0"/>
 </linearGradient>
</defs>
<!-- Data Preparation icon -->
<g>
 <rect x="38.8" y="46" width="45" height="45.2" rx="4.5" fill="#0b3c7d"/>
 <rect x="41.7" y="53.6" width="39.2" height="34.8" rx="1.5" fill="url(#gl)"/>
 <g stroke="#6c6c6c" stroke-width="1.8">
  <line x1="54.5" y1="53.6" x2="54.5" y2="88.4"/><line x1="67.8" y1="53.6" x2="67.8" y2="88.4"/>
  <line x1="41.7" y1="63.6" x2="80.9" y2="63.6"/><line x1="41.7" y1="77.2" x2="80.9" y2="77.2"/>
 </g>
</g>
<!-- Workspace icon -->
<g>
 <rect x="133.7" y="46" width="45" height="45" rx="4.5" fill="#0b3c7d"/>
 <rect x="136.6" y="53.6" width="39.2" height="34.6" rx="1.5" fill="url(#gl)"/>
 <rect x="143.6" y="58.8" width="6" height="25" fill="#1d74e6"/>
 <rect x="153" y="65.2" width="6.2" height="18.6" fill="#e8b21e"/>
 <rect x="162.6" y="71.4" width="6.2" height="12.4" fill="#d81e1e"/>
</g>
<!-- PCA icon -->
<g>
 <rect x="223.5" y="45.6" width="45.6" height="45.7" rx="6.5" fill="url(#gs)" stroke="#3d3d3d" stroke-width="2.4"/>
 <g fill="#1c72e8">
  <rect x="228.1" y="50.2" width="5.3" height="36.6"/>
  <rect x="237.2" y="62.9" width="5.5" height="23.9"/>
  <rect x="246.6" y="72.3" width="5.6" height="14.5"/>
  <rect x="256" y="78.4" width="6" height="8.4"/>
 </g>
 <text x="239.6" y="65" font-family="Liberation Sans, sans-serif" font-weight="bold" font-size="22.5" fill="#1c72e8" textLength="25.4" lengthAdjust="spacingAndGlyphs">%</text>
</g>
<!-- CCSD icon (disabled) -->
<g>
 <rect x="286.2" y="45.6" width="45.6" height="45.7" rx="6.5" fill="url(#gs)" stroke="#8a8a8a" stroke-width="2.4"/>
 <g fill="none">
  <circle cx="317.8" cy="57.6" r="9.6" stroke="#e9e9e9" stroke-width="1.4"/>
  <circle cx="317.8" cy="57.6" r="6.6" stroke="#d9d9d9" stroke-width="1.6"/>
  <circle cx="317.8" cy="57.6" r="3.4" stroke="#f4f4f4" stroke-width="2.2"/>
  <path d="M317.2,54.4 A3.3,3.3 0 0 1 321,57.8" stroke="#a8a8a8" stroke-width="1.3"/>
  <circle cx="297.7" cy="76.3" r="9" stroke="#e9e9e9" stroke-width="1.4"/>
  <circle cx="297.7" cy="76.3" r="5.9" stroke="#d9d9d9" stroke-width="1.6"/>
  <path d="M296.6,73.4 A3,3 0 1 0 300.6,77.6" stroke="#b0b0b0" stroke-width="1.5"/>
 </g>
 <line x1="316.6" y1="59.7" x2="304.4" y2="72.2" stroke="#8c8c8c" stroke-width="2.8"/>
 <polygon points="299.6,76.6 301.2,68 308.2,74.6" fill="#8c8c8c"/>
</g>
<!-- ECHOS icon -->
<g>
 <rect x="348.8" y="45.6" width="45.4" height="45.7" rx="6.5" fill="url(#gs)" stroke="#3d3d3d" stroke-width="2.4"/>
 <polyline points="357.2,53.3 357.2,82.8 387.2,82.8" fill="none" stroke="#0c2e6e" stroke-width="2.4"/>
 <g fill="#1c6ce2">
  <rect x="377.5" y="53.2" width="3" height="3"/><rect x="380.7" y="62.6" width="3" height="3"/><rect x="378" y="68.6" width="3" height="3"/>
  <rect x="365.2" y="65.6" width="3" height="3"/><rect x="361.8" y="68.8" width="3" height="3"/><rect x="358.6" y="72" width="3" height="3"/>
  <rect x="368.6" y="68.8" width="3" height="3"/><rect x="371.4" y="72" width="3" height="3"/><rect x="365.4" y="75" width="3" height="3"/>
 </g>
 <line x1="363.6" y1="76.4" x2="387.4" y2="53" stroke="#e01414" stroke-width="2.6"/>
</g>
<!-- PROFILE icon -->
<g>
 <rect x="412.5" y="45.6" width="45.4" height="45.7" rx="6.5" fill="url(#gs)" stroke="#3d3d3d" stroke-width="2.4"/>
 <path d="M416.6,62.6 H427.4 C429,62.6 429.6,61.2 430.4,58.4 H433.4 L434.4,56.8 L434.7,49.3 H436.3 L436.6,56.8 L437.6,58.4 H440.6 C441.4,61.2 442,62.6 443.6,62.6 H453.8" fill="none" stroke="#2424e0" stroke-width="2" stroke-linejoin="round"/>
 <path d="M416.6,76 C424,75.6 430,73.5 432.6,68 C433.6,66 434.4,64.2 435.4,64.2 C436.4,64.2 437.2,66 438.2,68 C440.8,73.5 446.8,75.6 453.8,76" fill="none" stroke="#e0206c" stroke-width="2"/>
 <path d="M416.6,85.5 H424 C427,85.3 429.5,84.4 431.6,83.4 L432.6,82.6 L433.6,79.2 L434.6,86.4 L435.6,80.6 L436.6,86.4 L437.6,79.2 L438.4,82.8 L439,83.4 C441,84.4 443.5,85.3 446.5,85.5 H453.8" fill="none" stroke="#e414e4" stroke-width="1.6" stroke-linejoin="round"/>
 <polygon points="431.2,129.6 440.2,129.6 435.7,134" fill="#8a0a0a"/>
</g>
<!-- pages: restore / close / scroll arrow -->
<g fill="none" stroke="#1a1a1a" stroke-width="1.5">
 <rect x="353.2" y="186.4" width="6.6" height="6.2"/>
 <polyline points="355.6,186.4 355.6,184 362,184 362,190.4 359.8,190.4"/>
 <path d="M374.4,184.4 L383.4,192.6 M383.4,184.4 L374.4,192.6" stroke-width="1.7"/>
</g>
<polygon points="369,224.8 382.6,224.8 375.8,216.6" fill="#7f7f7f"/>
</svg>

<!-- dropdown menu -->
<div class="a" style="left:404.4px;top:143.8px;width:346.6px;height:101px;background:#fff;border:1px solid #c6c6c6;box-sizing:border-box;box-shadow:2.5px 2.5px 2.5px rgba(0,0,0,0.55)"></div>
<svg class="a" style="left:0;top:0" width="766" height="542" viewBox="0 0 766 542">
<!-- menu icon 1 -->
<g>
 <rect x="413.3" y="150.9" width="23.6" height="23.4" rx="3.6" fill="url(#gs)" stroke="#767676" stroke-width="1.5"/>
 <path d="M415.6,159.6 H420.4 C422.6,159.4 423.4,157.6 424.2,156.4 L424.7,152.9 H425.5 L426,156.4 C426.8,157.6 427.6,159.4 429.8,159.6 H434.6" fill="none" stroke="#3c3ce4" stroke-width="1.5"/>
 <path d="M415.6,166 C419.5,165.8 422.4,164.4 423.8,161.8 L425.1,160.2 L426.4,161.8 C427.8,164.4 430.7,165.8 434.6,166" fill="none" stroke="#e2447e" stroke-width="1.5"/>
 <path d="M415.6,170.9 H419.6 C422,170.7 423.4,169.2 424.2,168.4 L425.1,167.7 L426,168.4 C426.8,169.2 428.2,170.7 430.6,170.9 H434.6" fill="none" stroke="#e624e6" stroke-width="1.6"/>
 <ellipse cx="425.1" cy="169.4" rx="1.8" ry="1.3" fill="#e624e6"/>
</g>
<!-- menu icon 2 (advisor) -->
<g>
 <path d="M419.4,204.3 H415.6 A1.6,1.6 0 0 1 414,202.7 V189 A1.6,1.6 0 0 1 415.6,187.4 H435 A1.6,1.6 0 0 1 436.6,189 V201" fill="#fcfcfc" stroke="#9a9a9a" stroke-width="1.3"/>
 <path d="M415.6,201.9 H419.2" fill="none" stroke="#c62222" stroke-width="1.1"/>
 <path d="M421.6,199.8 L422.1,194.8 H422.9 L423.4,199.8 Z" fill="#c62222" stroke="#c62222" stroke-width="0.5"/>
 <rect x="425.1" y="188.3" width="1.2" height="1.3" fill="#c62222"/>
 <ellipse cx="427.9" cy="195" rx="3.2" ry="4.4" fill="#141414"/>
 <path d="M419.6,205.9 C420,202.6 422.4,201.2 425.6,200.4 L427.9,201.6 L430.2,200.4 C433.4,201.2 435.9,202.6 436.3,205.9 Z" fill="#141414"/>
 <path d="M427.2,201.2 L427.9,200.6 L428.6,201.2 L428.4,205.9 L427.4,205.9 Z" fill="#e04040"/>
 <path d="M426.2,200.8 L427.3,204.4 M429.6,200.8 L428.5,204.4" stroke="#f4f4f4" stroke-width="0.5"/>
</g>
<!-- menu icon 3 (buffer subtraction) -->
<g>
 <path d="M417,216 H433.2 A3.6,3.6 0 0 1 436.8,219.6 V233 H424.2 V238.6 H417 A3.6,3.6 0 0 1 413.4,235 V219.6 A3.6,3.6 0 0 1 417,216 Z" fill="url(#gs)" stroke="#747474" stroke-width="1.5"/>
 <path d="M415.4,225.4 C418,224.6 419.4,222.4 420.4,220.4 C421.2,218.6 422.8,218 423.8,219.6 L424.9,221.2 L426,219.6 C427,218 428.6,218.6 429.4,220.4 C430.4,222.4 431.8,224.6 434.4,225.4" fill="none" stroke="#3f8ae8" stroke-width="1.4"/>
 <path d="M415.4,229.8 C418,229 419.4,227 420.4,225.2 C421.2,223.4 422.8,222.8 423.8,224.4 L424.9,226 L426,224.4 C427,222.8 428.6,223.4 429.4,225.2 C430.4,227 431.8,229 434.4,229.8" fill="none" stroke="#3f8ae8" stroke-width="1.4"/>
 <path d="M415.4,231.8 C418.5,231.6 421.5,230.6 423.4,229.6 L424.9,228.8 L426.4,229.6 C428.3,230.6 430.5,231.2 433.6,231.4" fill="none" stroke="#e84ae8" stroke-width="1.4"/>
 <rect x="424" y="234.1" width="13.6" height="3.8" fill="#e60a14"/>
</g>
</svg>

<span class="t" id="t_file" style='left:26.73px;top:9.00px;font-size:15.5px;color:#ffffff;font-family:"Liberation Sans", sans-serif;;transform:scaleX(0.9656);transform-origin:0 0'>File</span>
<span class="t" id="t_home" style='left:99.51px;top:9.00px;font-size:15.5px;color:#ffffff;font-family:"Liberation Sans", sans-serif;;transform:scaleX(1.0793);transform-origin:0 0'>Home</span>
<span class="t" id="t_view" style='left:183.65px;top:9.00px;font-size:15.5px;color:#ffffff;font-family:"Liberation Sans", sans-serif;;transform:scaleX(1.0241);transform-origin:0 0'>View</span>
<span class="t" id="t_tools" style='left:257.37px;top:9.00px;font-size:15.5px;color:#ffffff;font-family:"Liberation Sans", sans-serif;;transform:scaleX(1.0710);transform-origin:0 0'>Tools</span>
<span class="t" id="t_chem" style='left:336.72px;top:9.00px;font-size:15.5px;color:#9c1f1f;font-family:"Liberation Sans", sans-serif;;transform:scaleX(1.0420);transform-origin:0 0'>Chemometrics</span>
<span class="t" id="t_quant" style='left:480.56px;top:9.00px;font-size:15.5px;color:#ffffff;font-family:"Liberation Sans", sans-serif;;transform:scaleX(1.0726);transform-origin:0 0'>Quantitation</span>
<span class="t" id="t_data" style='left:608.26px;top:9.00px;font-size:15.5px;color:#ffffff;font-family:"Liberation Sans", sans-serif;;transform:scaleX(1.0286);transform-origin:0 0'>Data Analysis</span>
<span class="t" id="t_mol" style='left:744.53px;top:9.00px;font-size:15.5px;color:#ffffff;font-family:"Liberation Sans", sans-serif;;transform:scaleX(1.0600);transform-origin:0 0'>Molecule</span>
<span class="t" id="r_data" style='left:43.27px;top:100.00px;font-size:15.5px;color:#444444;font-family:"Liberation Sans", sans-serif;;transform:scaleX(1.0190);transform-origin:0 0'>Data</span>
<span class="t" id="r_prep" style='left:18.10px;top:121.00px;font-size:15.5px;color:#444444;font-family:"Liberation Sans", sans-serif;;transform:scaleX(1.0783);transform-origin:0 0'>Preparation</span>
<span class="t" id="r_work" style='left:116.00px;top:100.00px;font-size:15.5px;color:#444444;font-family:"Liberation Sans", sans-serif;;transform:scaleX(1.0600);transform-origin:0 0'>Workspace</span>
<span class="t" id="r_gen" style='left:79.07px;top:147.00px;font-size:15.5px;color:#444444;font-family:"Liberation Sans", sans-serif;;transform:scaleX(1.0458);transform-origin:0 0'>General</span>
<span class="t" id="r_pca" style='left:230.87px;top:100.00px;font-size:15.5px;color:#444444;font-family:"Liberation Sans", sans-serif;;transform:scaleX(0.9121);transform-origin:0 0'>PCA</span>
<span class="t" id="r_ccsd" style='left:288.88px;top:100.00px;font-size:15.5px;color:#9a9a9a;font-family:"Liberation Sans", sans-serif;;transform:scaleX(0.9036);transform-origin:0 0'>CCSD</span>
<span class="t" id="r_echos" style='left:345.88px;top:100.00px;font-size:15.5px;color:#444444;font-family:"Liberation Sans", sans-serif;;transform:scaleX(0.9333);transform-origin:0 0'>ECHOS</span>
<span class="t" id="r_prof" style='left:405.71px;top:100.00px;font-size:15.5px;color:#444444;font-family:"Liberation Sans", sans-serif;;transform:scaleX(0.9007);transform-origin:0 0'>PROFILE</span>
<span class="t" id="r_hos" style='left:288.26px;top:147.00px;font-size:15.5px;color:#444444;font-family:"Liberation Sans", sans-serif;;transform:scaleX(1.0285);transform-origin:0 0'>HOS Biologics</span>
<span class="t" id="m1" style='left:461.70px;top:154.00px;font-size:18px;color:#444444;font-family:"Liberation Sans", sans-serif;;transform:scaleX(0.8657);transform-origin:0 0'>PROFILE...</span>
<span class="t" id="m2a" style='left:461.69px;top:186.00px;font-size:18px;color:#444444;font-family:"Liberation Sans", sans-serif;;transform:scaleX(0.8716);transform-origin:0 0'>PROFILE</span>
<span class="t" id="m2" style='left:534.20px;top:186.00px;font-size:18px;color:#444444;font-family:"Liberation Sans", sans-serif;;transform:scaleX(0.9909);transform-origin:0 0'>Advised Processing...</span>
<span class="t" id="m3a" style='left:461.69px;top:219.00px;font-size:18px;color:#444444;font-family:"Liberation Sans", sans-serif;;transform:scaleX(0.8709);transform-origin:0 0'>PROFILE</span>
<span class="t" id="m3" style='left:534.46px;top:219.00px;font-size:18px;color:#444444;font-family:"Liberation Sans", sans-serif;;transform:scaleX(1.0238);transform-origin:0 0'>Buffer Subtraction...</span>
<span class="t" id="p_pages" style='left:8.60px;top:182.00px;font-size:15.5px;color:#333333;font-family:"Liberation Sans", sans-serif;;transform:scaleX(1.0036);transform-origin:0 0'>Pages</span>
<span class="t" id="p_num" style='left:22.04px;top:225.00px;font-size:16px;color:#1f2f5c;font-family:"DejaVu Sans Condensed", "DejaVu Sans", sans-serif;font-weight:bold;transform:scaleX(1.0642);transform-origin:0 0'>1.</span>
<span class="t" id="p_title" style='left:41.86px;top:225.00px;font-size:16px;color:#1f3465;font-family:"DejaVu Sans Condensed", "DejaVu Sans", sans-serif;;transform:scaleX(0.9866);transform-origin:0 0'>antibody.10.1.1r</span>
<span class="t" id="g_title" style='left:466.59px;top:256.00px;font-size:21px;color:#84f51c;font-family:"DejaVu Sans Condensed", "DejaVu Sans", sans-serif;;transform:scaleX(1.0094);transform-origin:0 0'>antibody.10.1.1r</span>
</body></html>
